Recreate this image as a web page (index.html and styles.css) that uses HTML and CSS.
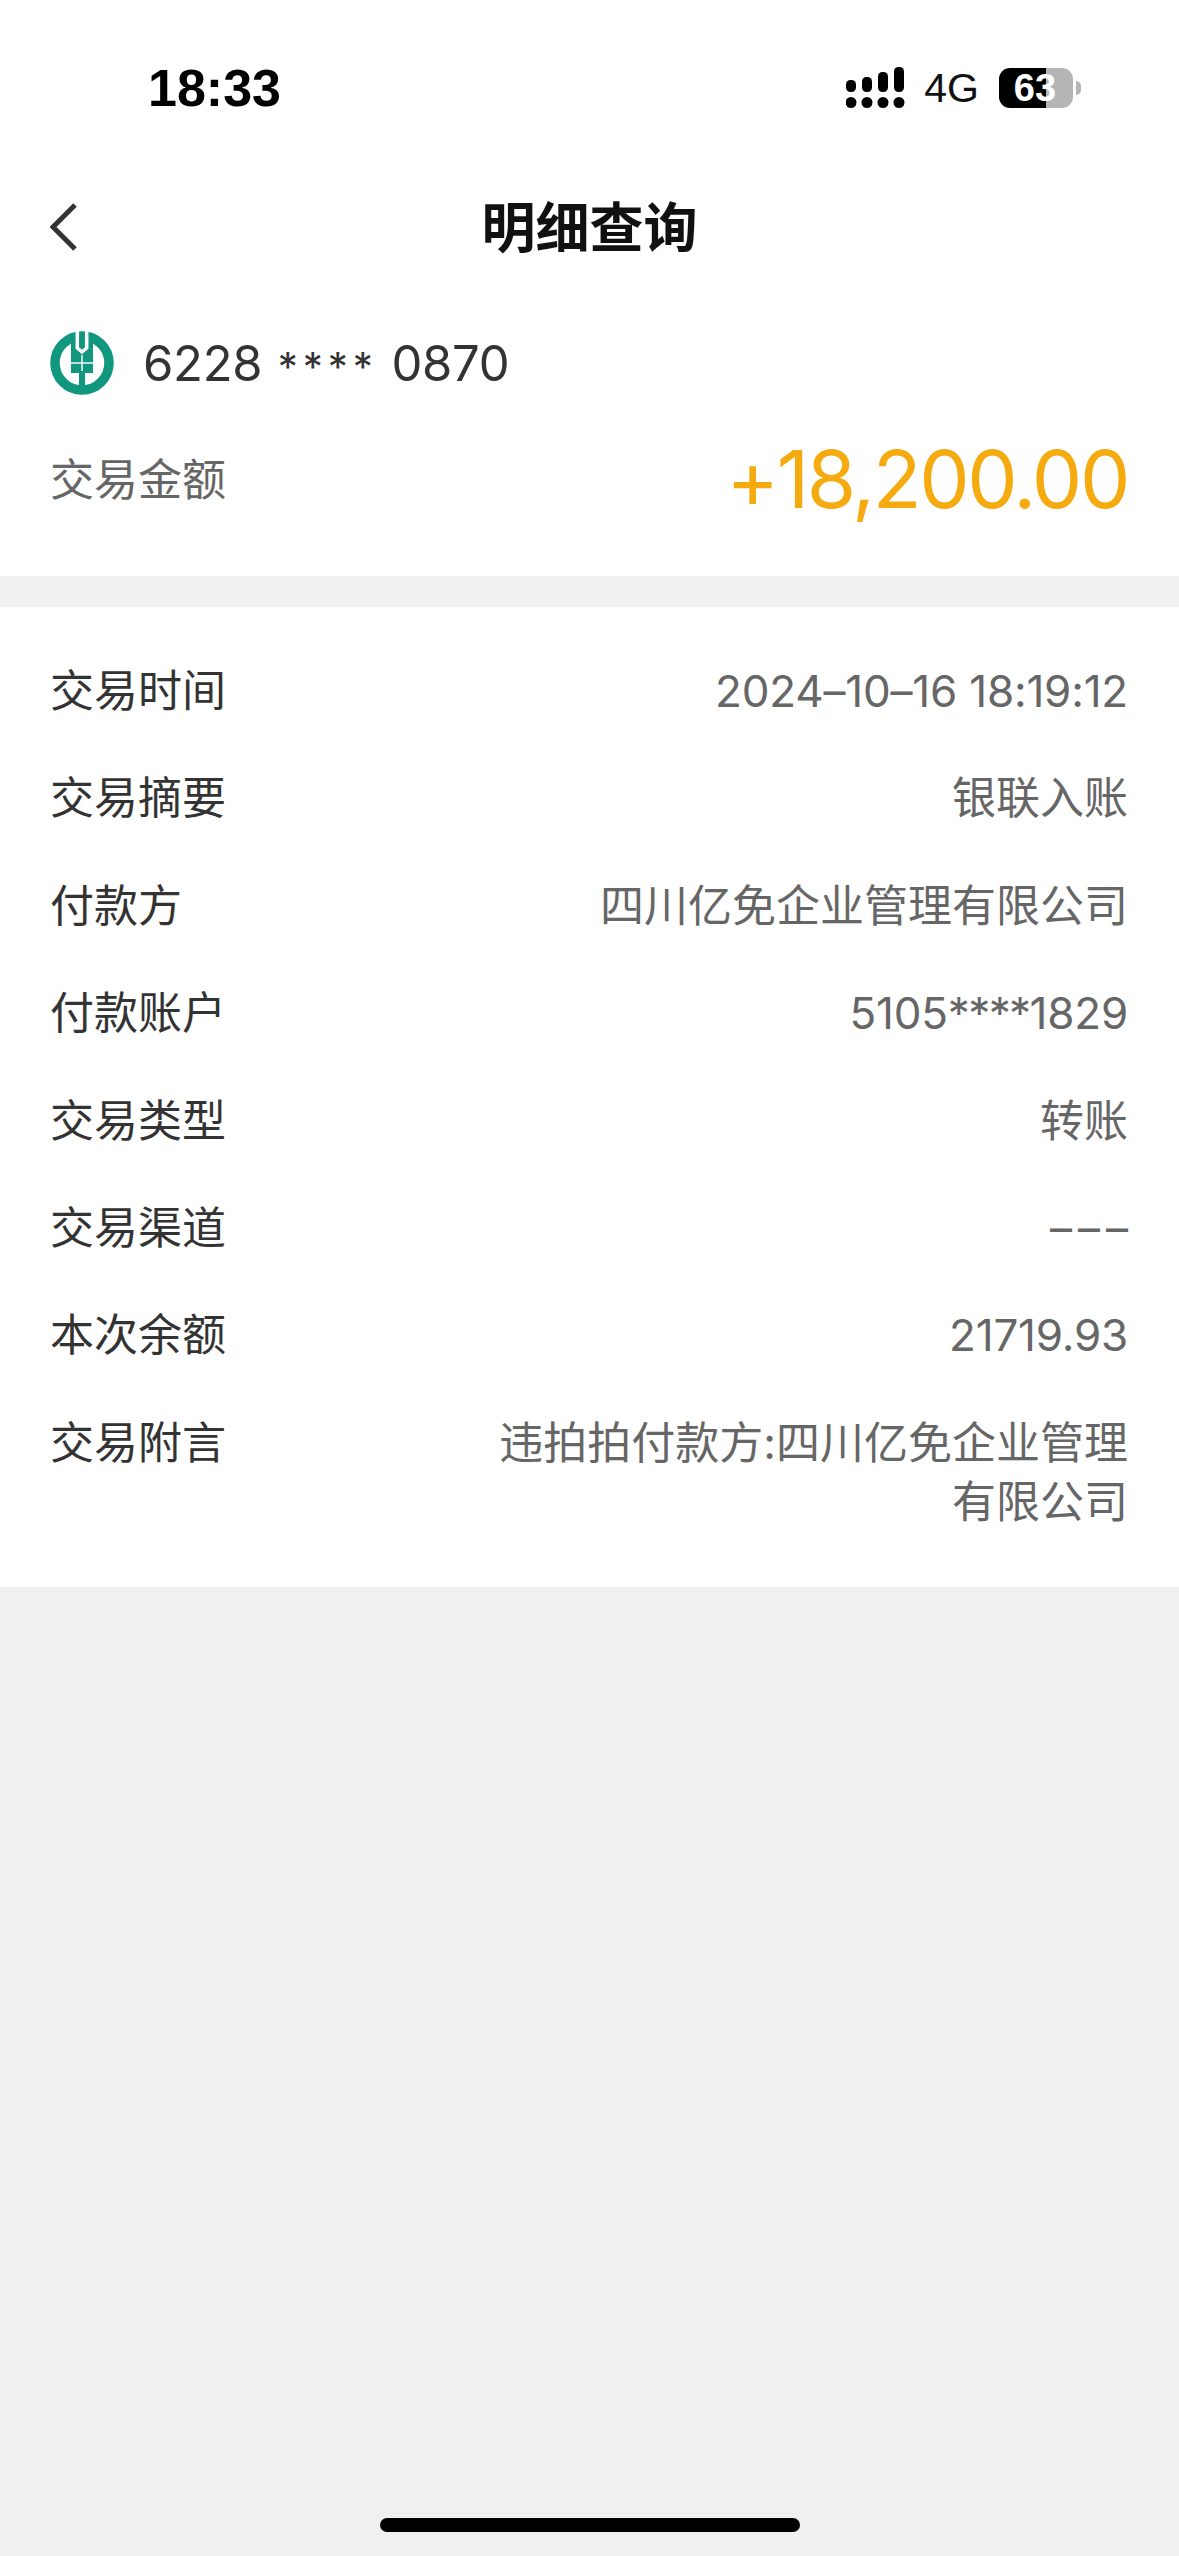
FILE: index.html
```html
<!DOCTYPE html>
<html lang="zh-CN">
<head>
  <meta charset="UTF-8" />
  <meta name="viewport" content="width=device-width, initial-scale=1.0" />
  <title>明细查询</title>
  <link rel="stylesheet" href="styles.css">
</head>
<body>
  <div class="page">
    <!-- Summary block: status bar, nav, card and amount -->
    <div class="summary">
      <div class="status-bar">
        <span class="status-time">18:33</span>
        <div class="status-icons">
          <svg class="signal" width="59" height="42" viewBox="0 0 59 42" fill="#000">
            <rect x="0" y="13" width="10" height="12" rx="4.5"/>
            <rect x="16" y="10" width="10" height="15" rx="4.5"/>
            <rect x="32" y="5" width="10" height="20" rx="4.5"/>
            <rect x="48" y="0" width="10" height="25" rx="4.5"/>
            <circle cx="5" cy="35.5" r="5.5"/>
            <circle cx="21" cy="35.5" r="5.5"/>
            <circle cx="37" cy="35.5" r="5.5"/>
            <circle cx="53" cy="35.5" r="5.5"/>
          </svg>
          <span class="network">4G</span>
          <div class="battery"><span>63</span></div>
          <div class="battery-nub"></div>
        </div>
      </div>

      <div class="nav">
        <svg class="back" width="30" height="50" viewBox="0 0 30 50" fill="none" stroke="#333" stroke-width="5">
          <path d="M25 3 L3 25 L25 47"/>
        </svg>
        <h1>明细查询</h1>
      </div>

      <div class="card-row">
        <svg class="bank-logo" width="64" height="64" viewBox="0 0 64 64">
          <circle cx="32" cy="32" r="27" fill="none" stroke="#12977f" stroke-width="9.5"/>
          <rect x="21" y="5" width="22" height="37" fill="#12977f"/>
          <path d="M27.3 -1 V17 L32 21 L36.7 17 V-1" fill="none" stroke="#fff" stroke-width="3.5"/>
          <rect x="21" y="31.3" width="22" height="1.4" fill="#fff"/>
          <rect x="31.3" y="24" width="1.4" height="16" fill="#fff"/>
          <rect x="29" y="42" width="6" height="18" fill="#12977f"/>
        </svg>
        <span class="card-no">6228 <span class="card-mask">****</span> 0870</span>
      </div>

      <div class="amount-row">
        <span class="amount-label">交易金额</span>
        <span class="amount">+18,200.00</span>
      </div>
    </div>

    <!-- Detail rows -->
    <div class="detail">
      <div class="row"><span class="key">交易时间</span><span class="val num">2024–10–16 18:19:12</span></div>
      <div class="row"><span class="key">交易摘要</span><span class="val">银联入账</span></div>
      <div class="row"><span class="key">付款方</span><span class="val">四川亿免企业管理有限公司</span></div>
      <div class="row"><span class="key">付款账户</span><span class="val num">5105<span class="mask">****</span>1829</span></div>
      <div class="row"><span class="key">交易类型</span><span class="val">转账</span></div>
      <div class="row"><span class="key">交易渠道</span><span class="val dash">–––</span></div>
      <div class="row"><span class="key">本次余额</span><span class="val num">21719.93</span></div>
      <div class="row"><span class="key">交易附言</span><span class="val">违拍拍付款方:四川亿免企业管理有限公司</span></div>
    </div>

    <div class="home-bar"></div>
  </div>
</body>
</html>
```

FILE: styles.css
```css
html, body {
  margin: 0;
  padding: 0;
}
body {
  background: #f0f0f0;
  font-family: Inter, "Noto Sans CJK SC", sans-serif;
}
.page {
  display: flex;
  flex-direction: column;
  height: 2556px;
  overflow: hidden;
}
/* Top white block */
.summary {
  background: #fff;
  height: 576px;
  padding: 0 50px;
  box-sizing: border-box;
}
.status-bar {
  display: flex;
  justify-content: space-between;
  align-items: center;
  height: 42px;
  padding: 67px 0 0 98px;
}
.status-time {
  font-family: "Liberation Sans", sans-serif;
  font-weight: 700;
  font-size: 52px;
  color: #000;
}
.status-icons {
  display: flex;
  align-items: center;
  margin-right: 48px;
}
.network {
  font-family: "Liberation Sans", sans-serif;
  font-size: 41px;
  color: #111;
  margin: 0 20px 0 19px;
}
.battery {
  width: 74px;
  height: 40px;
  border-radius: 11px;
  background: linear-gradient(to right, #000 47px, #b5b5b5 47px);
  display: flex;
  align-items: center;
  justify-content: center;
  color: #fff;
  font-family: "Liberation Sans", sans-serif;
  font-weight: 700;
  font-size: 38px;
}
.battery span {
  margin-right: 2px;
}
.battery-nub {
  width: 5px;
  height: 14px;
  margin-left: 3px;
  background: #b5b5b5;
  border-radius: 0 6px 6px 0;
}
.nav {
  display: flex;
  align-items: center;
  height: 60px;
  margin-top: 88px;
}
.back {
  flex: none;
}
.nav h1 {
  flex: 1;
  margin: 0 0 0 -30px;
  padding-bottom: 6px;
  text-align: center;
  font-family: "Noto Sans CJK SC", sans-serif;
  font-size: 54px;
  font-weight: 700;
  color: #111;
}
.card-row {
  display: flex;
  align-items: center;
  gap: 29px;
  margin-top: 74px;
}
.bank-logo {
  flex: none;
}
.card-no {
  font-size: 49px;
  letter-spacing: -0.3px;
  color: #333;
}
.card-mask {
  font-size: 40px;
  letter-spacing: 5px;
  margin-left: 2px;
}
.amount-row {
  display: flex;
  justify-content: space-between;
  align-items: center;
  margin-top: 35px;
}
.amount-label {
  font-size: 44px;
  color: #666;
  padding-bottom: 4px;
}
.amount {
  font-size: 80px;
  letter-spacing: -2.4px;
  margin-right: 1px;
  color: #f5ab0f;
}
/* Detail card */
.detail {
  background: #fff;
  margin-top: 31px;
  height: 980px;
  box-sizing: border-box;
  padding: 55px 51px 0 50px;
}
.row {
  display: flex;
  justify-content: space-between;
  align-items: flex-start;
  margin-bottom: 48.4px;
  font-size: 44px;
  line-height: 59px;
}
.key {
  flex: none;
  color: #333;
}
.val {
  max-width: 640px;
  color: #666;
  text-align: right;
}
.num {
  letter-spacing: -0.2px;
}
.mask {
  letter-spacing: -1.6px;
}
.dash {
  letter-spacing: 6px;
  margin-right: -6px;
}
.home-bar {
  width: 420px;
  height: 14px;
  margin: auto auto 24px;
  border-radius: 7px;
  background: #000;
}
```
